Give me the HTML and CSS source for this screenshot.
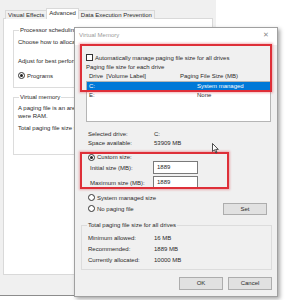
FILE: index.html
```html
<!DOCTYPE html>
<html lang="en">
<head>
    <meta charset="UTF-8">
    <meta name="viewport" content="width=device-width, initial-scale=1.0">
    <title>Virtual Memory</title>
    <link rel="stylesheet" href="styles.css">
</head>
<body>

    <div class="desk">

        <!-- back window: Performance Options -->
        <div class="back">
            <div class="tabs">
                <div class="tab">Visual Effects</div>
                <div class="tab active">Advanced</div>
                <div class="tab">Data Execution Prevention</div>
            </div>
            <div class="panel">
                <fieldset class="group proc">
                    <legend>Processor scheduling</legend>
                    <p>Choose how to allocate processor resources.</p>
                    <p class="adjust">Adjust for best performance of:</p>
                    <div class="opt"><span class="radio on"></span>Programs</div>
                </fieldset>
                <fieldset class="group vmem">
                    <legend>Virtual memory</legend>
                    <p>A paging file is an area on the hard disk that Windows uses as if it<br>were RAM.</p>
                    <p class="total">Total paging file size for all drives:</p>
                </fieldset>
            </div>
        </div>

        <!-- front window: Virtual Memory -->
        <div class="win">
            <div class="titlebar">
                <span class="title">Virtual Memory</span>
                <span class="close">&#x2715;</span>
            </div>
            <div class="body">
                <div class="check-row"><span class="checkbox"></span>Automatically manage paging file size for all drives</div>
                <div class="caption">Paging file size for each drive</div>
                <div class="list-head">
                    <span class="col-drive">Drive&nbsp; [Volume Label]</span>
                    <span class="col-size">Paging File Size (MB)</span>
                </div>
                <div class="list">
                    <div class="row selected">
                        <span class="col-drive">C:</span>
                        <span class="col-size">System managed</span>
                    </div>
                    <div class="row">
                        <span class="col-drive">E:</span>
                        <span class="col-size">None</span>
                    </div>
                </div>

                <div class="info">
                    <span>Selected drive:</span><span>C:</span>
                    <span>Space available:</span><span>53909 MB</span>
                </div>

                <div class="opt custom"><span class="radio on"></span>Custom size:</div>
                <div class="field">
                    <span>Initial size (MB):</span>
                    <div class="input">1889</div>
                </div>
                <div class="field">
                    <span>Maximum size (MB):</span>
                    <div class="input">1889</div>
                </div>

                <div class="set-row">
                    <div class="opts">
                        <div class="opt"><span class="radio"></span>System managed size</div>
                        <div class="opt"><span class="radio"></span>No paging file</div>
                    </div>
                    <div class="btn set">Set</div>
                </div>

                <fieldset class="group totals">
                    <legend>Total paging file size for all drives</legend>
                    <div class="totals-grid">
                        <span>Minimum allowed:</span><span>16 MB</span>
                        <span>Recommended:</span><span>1889 MB</span>
                        <span>Currently allocated:</span><span>10000 MB</span>
                    </div>
                </fieldset>

                <div class="buttons">
                    <div class="btn">OK</div>
                    <div class="btn">Cancel</div>
                </div>
            </div>

            <div class="mark mark-drives"></div>
            <div class="mark mark-size"></div>
            <svg class="cursor" width="7" height="11" viewBox="0 0 7 11">
                <path d="M0.5 0.5 L0.5 8.5 L2.5 6.8 L3.9 10 L5 9.5 L3.7 6.4 L6.3 6.4 Z" fill="#fff" stroke="#222" stroke-width="0.8" stroke-linejoin="round"/>
            </svg>
        </div>

    </div>

</body>
</html>
```

FILE: styles.css
```css
* {
    box-sizing: border-box;
}

body {
    margin: 0;
    background: #fff;
    font-family: "Liberation Sans", Arial, sans-serif;
    font-size: 6px;
    color: #2a2a2a;
}

p {
    margin: 0;
}

.desk {
    position: relative;
    width: 293px;
    height: 300px;
    overflow: hidden;
}

/* ---------- back window ---------- */

.back {
    width: 216px;
    height: 296px;
    background: #f0f0f0;
    border-bottom: 1px solid #8c8c8c;
    padding: 8px 0 0 3px;
}

.tabs {
    display: flex;
    align-items: flex-end;
    padding-left: 2px;
    height: 11px;
}

.tab {
    height: 9px;
    line-height: 8px;
    padding: 0 2px;
    border: 1px solid #d9d9d9;
    border-bottom: none;
    background: #f0f0f0;
    margin-right: -1px;
}

.tab.active {
    height: 11px;
    line-height: 9px;
    background: #fff;
    position: relative;
    z-index: 1;
}

.panel {
    width: 210px;
    height: 257px;
    margin-top: -1px;
    background: #fff;
    border: 1px solid #d9d9d9;
    padding: 7px 4px 0 9px;
}

.group {
    margin: 0;
    border: 1px solid #dcdcdc;
    padding: 0 4px;
}

.group legend {
    padding: 0 1px;
    margin-left: 1px;
    line-height: 9px;
}

.proc {
    height: 62px;
}

.proc p {
    line-height: 9px;
    margin-top: 3px;
}

.proc .adjust {
    margin-top: 10px;
}

.proc .opt {
    margin-top: 5px;
}

.vmem {
    height: 62px;
    margin-top: 5px;
}

.vmem p {
    line-height: 8px;
    margin-top: 2px;
}

.vmem .total {
    margin-top: 4px;
}

/* ---------- front window ---------- */

.win {
    position: absolute;
    left: 74px;
    top: 27px;
    width: 204px;
    height: 270px;
    background: #f0f0f0;
    border: 1px solid #a0a0a0;
    box-shadow: 2px 2px 4px rgba(0, 0, 0, 0.35);
}

.titlebar {
    height: 17px;
    background: #fff;
    display: flex;
    align-items: center;
    justify-content: space-between;
    padding: 0 8px 3px 4px;
    color: #9a9a9a;
}

.close {
    font-size: 7px;
    color: #8a8a8a;
}

.body {
    padding: 8px 5px 0 11px;
}

.check-row,
.opt {
    display: flex;
    align-items: center;
    height: 9px;
}

.checkbox {
    width: 7px;
    height: 7px;
    border: 1px solid #333;
    background: #fff;
    margin-right: 2px;
}

.radio {
    width: 7px;
    height: 7px;
    border: 1px solid #333;
    border-radius: 50%;
    background: #fff;
    margin-right: 2px;
    display: flex;
    align-items: center;
    justify-content: center;
}

.radio.on::after {
    content: "";
    width: 3px;
    height: 3px;
    border-radius: 50%;
    background: #222;
}

.caption,
.list-head {
    height: 9px;
    line-height: 9px;
}

.caption {
    margin-top: 1px;
}

.list-head {
    display: flex;
    padding-left: 3px;
}

.col-drive {
    width: 91px;
}

.list {
    width: 185px;
    height: 41px;
    background: #fff;
    border: 1px solid #b5b5b5;
}

.row {
    display: flex;
    height: 9px;
    line-height: 9px;
    padding-left: 2px;
}

.row .col-size {
    padding-left: 17px;
}

.row.selected {
    background: #0078d7;
    color: #fff;
}

.info {
    display: grid;
    grid-template-columns: 66px 1fr;
    grid-auto-rows: 9px;
    line-height: 9px;
    margin-top: 8px;
    padding-left: 2px;
}

.opt.custom {
    margin-top: 5px;
    height: 8px;
    padding-left: 2px;
}

.field {
    display: flex;
    align-items: center;
    height: 13px;
    padding-left: 4px;
    margin-bottom: 2px;
}

.field span {
    width: 63px;
}

.input {
    width: 45px;
    height: 13px;
    background: #fff;
    border: 1px solid #7a7a7a;
    line-height: 11px;
    padding-left: 3px;
}

.set-row {
    display: flex;
    justify-content: space-between;
    align-items: flex-end;
    margin-top: 3px;
    padding-left: 2px;
}

.set-row .opt {
    height: 11px;
}

.btn {
    height: 13px;
    line-height: 11px;
    text-align: center;
    background: #e1e1e1;
    border: 1px solid #adadad;
}

.set {
    width: 44px;
    height: 12px;
    line-height: 10px;
    margin-right: 5px;
    margin-bottom: -1px;
}

.totals {
    margin: 7px 0 0 -5px;
    height: 49px;
    padding: 0 4px;
}

.totals-grid {
    display: grid;
    grid-template-columns: 66px 1fr;
    grid-auto-rows: 11px;
    line-height: 11px;
    margin-top: 3px;
    padding-left: 2px;
}

.buttons {
    display: flex;
    justify-content: flex-end;
    gap: 5px;
    margin-top: 7px;
}

.buttons .btn {
    width: 44px;
}

/* red annotation frames drawn over the screenshot */
.mark {
    position: absolute;
    border: 2px solid #de2f38;
    box-shadow: 0 0 2px 1px rgba(222, 47, 56, 0.35);
}

.mark-drives {
    left: 5px;
    top: 16px;
    width: 192px;
    height: 48px;
}

.mark-size {
    left: 5px;
    top: 124px;
    width: 149px;
    height: 37px;
}

.cursor {
    position: absolute;
    left: 137px;
    top: 115px;
}
```
